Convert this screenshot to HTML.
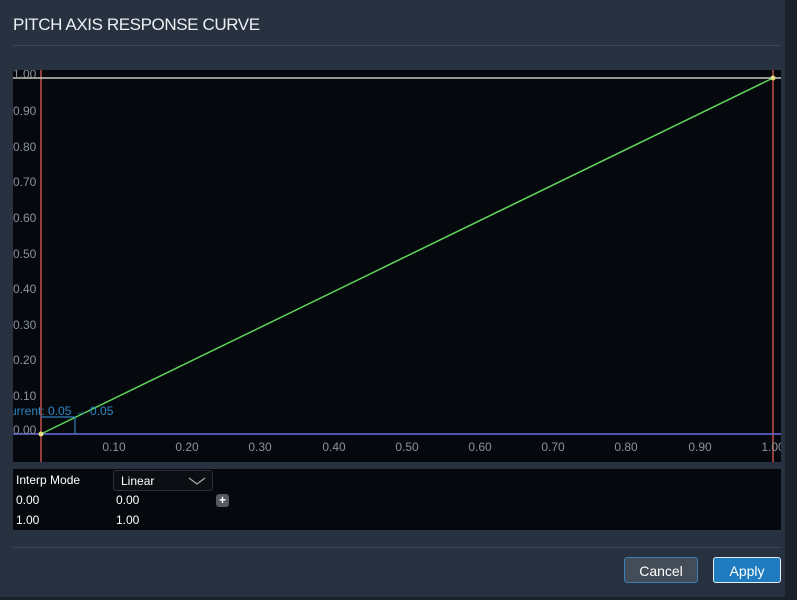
<!DOCTYPE html><html><head><style>
body{margin:0;width:797px;height:600px;background:#1a212b;font-family:"Liberation Sans",sans-serif;overflow:hidden;position:relative}
.dlg{position:absolute;left:0;top:0;width:785px;height:597px;background:#27313f}
.t{position:absolute;left:13px;top:15px;color:#eef1f4;font-size:17px;letter-spacing:-0.4px}
.sep{position:absolute;left:13px;width:768px;height:1px;background:#3d4856}
.plot{position:absolute;left:13px;top:70px;width:768px;height:392px;background:#05090d;overflow:hidden}
.tbl{position:absolute;left:13px;top:469px;width:768px;height:61px;background:#05090d;color:#fff;font-size:12px}
.tbl div{position:absolute}
.btn{position:absolute;top:557px;height:26px;font-size:14px;color:#fff;text-align:center;line-height:26px;border-radius:3px;box-sizing:border-box}
</style></head><body><div class="dlg">
<div class="t">PITCH AXIS RESPONSE CURVE</div>
<div class="sep" style="top:45px"></div>
<div class="plot"><svg width="768" height="392" font-family="Liberation Sans" font-size="12" fill="#8a929b">
<line x1="28" y1="0" x2="28" y2="392" stroke="#c0504d" stroke-width="1.5"/>
<line x1="760" y1="0" x2="760" y2="392" stroke="#c0504d" stroke-width="1.5"/>
<line x1="0" y1="8" x2="768" y2="8" stroke="#c8c8c0" stroke-width="1.5"/>
<line x1="0" y1="364" x2="768" y2="364" stroke="#6a6ae0" stroke-width="1.5"/>
<line x1="28" y1="364" x2="760" y2="8" stroke="#5fd65a" stroke-width="1.5"/>
<polyline points="28,347 62,347 62,364" fill="none" stroke="#2f7fb8" stroke-width="1.2"/>
<text x="-3" y="345" fill="#2f86c4">urrent: 0.05 → 0.05</text>
<circle cx="28" cy="364" r="2.5" fill="#e0e080"/><circle cx="760" cy="8" r="2.5" fill="#e0e080"/>
<g><text x="0" y="8">1.00</text><text x="0" y="45">0.90</text><text x="0" y="81">0.80</text><text x="0" y="116">0.70</text><text x="0" y="152">0.60</text><text x="0" y="188">0.50</text><text x="0" y="223">0.40</text><text x="0" y="259">0.30</text><text x="0" y="294">0.20</text><text x="0" y="330">0.10</text><text x="0" y="364">0.00</text></g>
<g text-anchor="middle"><text x="101" y="381">0.10</text><text x="174" y="381">0.20</text><text x="247" y="381">0.30</text><text x="321" y="381">0.40</text><text x="394" y="381">0.50</text><text x="467" y="381">0.60</text><text x="540" y="381">0.70</text><text x="613" y="381">0.80</text><text x="687" y="381">0.90</text><text x="760" y="381">1.00</text></g>
</svg></div>
<div class="tbl">
<div style="left:3px;top:4px">Interp Mode</div>
<div style="left:100px;top:1px;width:98px;height:19px;border:1px solid #2a3038;border-radius:3px;background:#0b0f14"><span style="position:absolute;left:7px;top:3px">Linear</span><svg style="position:absolute;left:74px;top:5px" width="18" height="10"><polyline points="1,2 9,8 17,2" fill="none" stroke="#aaa" stroke-width="1.2"/></svg></div>
<div style="left:3px;top:24px">0.00</div><div style="left:103px;top:24px">0.00</div>
<div style="left:203px;top:25px;width:13px;height:13px;background:#555a60;border-radius:3px;color:#fff;font-size:12px;line-height:13px;text-align:center;font-weight:bold">+</div>
<div style="left:3px;top:44px">1.00</div><div style="left:103px;top:44px">1.00</div>
</div>
<div class="sep" style="top:547px"></div>
<div class="btn" style="left:624px;width:74px;background:#444c57;border:1.5px solid #3a7fb5">Cancel</div>
<div class="btn" style="left:713px;width:68px;background:#1f7bc0;border:1.5px solid #e6eef5">Apply</div>
</div></body></html>
